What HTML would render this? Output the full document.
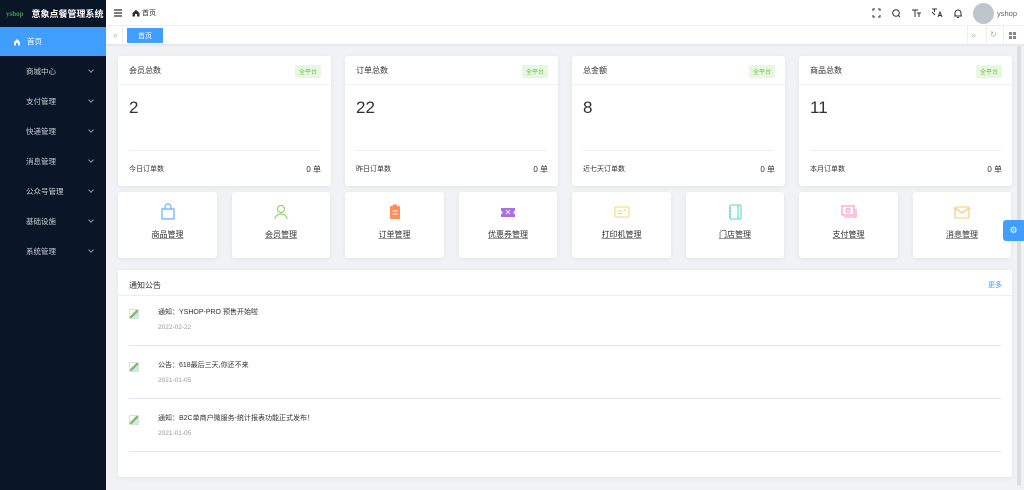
<!DOCTYPE html><html><head><meta charset="utf-8"><style>
*{margin:0;padding:0;box-sizing:border-box}
body{width:1024px;height:490px;overflow:hidden;font-family:"Liberation Sans","Noto Sans CJK SC",sans-serif;background:#f0f2f5;position:relative;font-size:8px;color:#303133}
.side{position:absolute;left:0;top:0;width:106px;height:490px;background:#0a1628}
.logo{height:27px;display:flex;align-items:center;padding-left:6px;color:#fff;font-weight:bold;font-size:9px}
.logo i{font-style:normal;color:#3a9a4a;font-size:7px;margin-right:8px;font-family:"Liberation Serif",serif}
.act{height:29px;background:#409eff;color:#fff;display:flex;align-items:center;padding-left:13px;font-size:7.5px}
.mi{height:30px;color:#c8ccd3;display:flex;align-items:center;padding-left:26px;font-size:7.5px;position:relative}
.mi:after{content:"";position:absolute;right:13px;top:12px;width:3px;height:3px;border-right:1px solid #8a93a0;border-bottom:1px solid #8a93a0;transform:rotate(45deg)}
.hdr{position:absolute;left:106px;top:0;right:0;height:26px;background:#fff;border-bottom:1px solid #eee}
.tags{position:absolute;left:106px;top:26px;right:0;height:19px;background:#fff;border-bottom:1px solid #e4e7ed;box-shadow:0 1px 2px rgba(0,0,0,.05)}
.tag{position:absolute;left:21px;top:2px;width:36px;height:15px;background:#409eff;color:#fff;font-size:7px;display:flex;align-items:center;justify-content:center}
.card{position:absolute;background:#fff;border-radius:3px;box-shadow:0 1px 4px rgba(0,0,0,.06)}
.st .h{height:29px;border-bottom:1px solid #eef0f3;display:flex;align-items:center;justify-content:space-between;padding:0 10px 0 11px;font-size:8px;color:#303133}
.st .b{position:absolute;right:10px;top:9px;background:#e7f7e1;color:#67c23a;font-size:6px;padding:2px 4px;border-radius:2px}
.st .n{position:absolute;left:11px;top:42px;font-size:17px;color:#303133}
.st .l{position:absolute;left:11px;right:11px;top:94px;border-top:1px solid #eceef2}
.st .f{position:absolute;left:11px;right:10px;top:108px;display:flex;justify-content:space-between;font-size:7px;color:#303133}
.st .f b{font-weight:normal;font-size:8px}
.q{text-align:center}
.q svg{position:absolute;left:50%;top:11px;margin-left:-9px}
.q span{position:absolute;left:0;right:0;top:37px;font-size:8px;color:#303133;text-decoration:underline;text-decoration-color:#999}
.nt{left:118px;top:270px;width:894px;height:207px}
.nt .h{height:26px;border-bottom:1px solid #eceef2;padding:10px 0 0 11px;font-size:8px;display:flex;justify-content:space-between;padding-right:10px}
.nt .h a{color:#409eff;font-size:7px}
.it{position:absolute;left:11px;right:11px;height:52px;border-bottom:1px solid #e4e7ed}
.it .t{position:absolute;left:29px;top:13px;font-size:7px;color:#303133}
.it .d{position:absolute;left:29px;top:30px;font-size:6.5px;color:#999}
.it .im{position:absolute;left:0;top:15px;width:10px;height:10px;border:1px solid #ddd;border-radius:1px;background:linear-gradient(135deg,#fff 40%,#7bbf6a 40%,#7bbf6a 60%,#cfe6f5 60%)}
</style></head><body>
<div class="side">
<div class="logo"><i>yshop</i>意象点餐管理系统</div>
<div class="act"><svg width="8" height="8" viewBox="0 0 8 8" style="margin-right:6px"><path d="M1 4L4 1l3 3v3.5H5V5H3v2.5H1z" fill="#fff"/></svg>首页</div>
<div class="mi">商城中心</div><div class="mi">支付管理</div><div class="mi">快递管理</div><div class="mi">消息管理</div><div class="mi">公众号管理</div><div class="mi">基础设施</div><div class="mi">系统管理</div>
</div>
<div class="hdr">
<svg style="position:absolute;left:8px;top:9px" width="8" height="8" viewBox="0 0 8 8"><path d="M0 1h8M0 4h8M0 7h8" stroke="#303133" stroke-width="1.3"/></svg>
<svg style="position:absolute;left:26px;top:9px" width="8" height="8" viewBox="0 0 8 8"><path d="M0.5 4L4 0.8 7.5 4v3.5H5V5H3v2.5H0.5z" fill="#303133"/></svg>
<span style="position:absolute;left:36px;top:8px;font-size:7px;color:#303133">首页</span>
<svg style="position:absolute;left:766px;top:8px" width="110" height="10" viewBox="0 0 110 10" fill="none" stroke="#303133" stroke-width="1">
<path d="M1 3V1h2M6 1h2v2M8 7v2H6M3 9H1V7"/><circle cx="24" cy="5" r="3.3"/><path d="M26.5 7.5l1.5 1.5"/>
<path d="M40 2h6M43 2v7M45 5h4M47 5v4"/><path d="M60 1h5M62.5 1v3M60 4l3 3M66 9l2-5 2 5M67 7.5h2"/>
<path d="M83 8V5a3 3 0 016 0v3h1H82M85 9.5h2"/></svg>
<div style="position:absolute;left:867px;top:3px;width:21px;height:21px;border-radius:50%;background:#c0c4cc"></div>
<span style="position:absolute;left:891px;top:9px;font-size:7.5px;color:#606266">yshop</span>
</div>
<div class="tags">
<span style="position:absolute;left:7px;top:4px;color:#bbb;font-size:9px">«</span>
<div style="position:absolute;left:16px;top:0;width:1px;height:19px;background:#eee"></div>
<div class="tag">首页</div>
<div style="position:absolute;left:861px;top:0;width:1px;height:19px;background:#eee"></div>
<span style="position:absolute;left:865px;top:4px;color:#bbb;font-size:9px">»</span>
<div style="position:absolute;left:880px;top:0;width:1px;height:19px;background:#eee"></div>
<span style="position:absolute;left:884px;top:4px;color:#aaa;font-size:8px">↻</span>
<div style="position:absolute;left:897px;top:0;width:1px;height:19px;background:#eee"></div>
<svg style="position:absolute;left:903px;top:6px" width="7" height="7"><rect x="0" y="0" width="3" height="3" fill="#888"/><rect x="4" y="0" width="3" height="3" fill="#888"/><rect x="0" y="4" width="3" height="3" fill="#888"/><rect x="4" y="4" width="3" height="3" fill="#888"/></svg>
</div>
<div style="position:absolute;left:1017px;top:46px;width:4px;height:440px;background:#ddd;border-radius:2px"></div>

<div class="card st" style="left:118px;top:56px;width:213px;height:130px"><div class="h">会员总数</div><span class="b">全平台</span><div class="n">2</div><div class="l"></div><div class="f"><span>今日订单数</span><b>0 单</b></div></div>
<div class="card st" style="left:345px;top:56px;width:213px;height:130px"><div class="h">订单总数</div><span class="b">全平台</span><div class="n">22</div><div class="l"></div><div class="f"><span>昨日订单数</span><b>0 单</b></div></div>
<div class="card st" style="left:572px;top:56px;width:213px;height:130px"><div class="h">总金额</div><span class="b">全平台</span><div class="n">8</div><div class="l"></div><div class="f"><span>近七天订单数</span><b>0 单</b></div></div>
<div class="card st" style="left:799px;top:56px;width:213px;height:130px"><div class="h">商品总数</div><span class="b">全平台</span><div class="n">11</div><div class="l"></div><div class="f"><span>本月订单数</span><b>0 单</b></div></div>

<div class="card q" style="left:118px;top:192px;width:99px;height:66px"><svg width="18" height="18" viewBox="0 0 18 18" fill="none" stroke="#5cb3ff" stroke-width="1.2"><path d="M3 6h12v10H3zM6 6V4a3 3 0 016 0v2"/></svg><span>商品管理</span></div>
<div class="card q" style="left:232px;top:192px;width:98px;height:66px"><svg width="18" height="18" viewBox="0 0 18 18" fill="none" stroke="#95d475" stroke-width="1.2"><circle cx="9" cy="6" r="3.5"/><path d="M3 16a6 5 0 0112 0"/></svg><span>会员管理</span></div>
<div class="card q" style="left:345px;top:192px;width:99px;height:66px"><svg width="18" height="18" viewBox="0 0 18 18"><rect x="4" y="3" width="10" height="13" rx="1" fill="#ff8c5a"/><rect x="7" y="1.5" width="4" height="3" fill="#ff8c5a"/><path d="M6.5 8h5M6.5 11h5" stroke="#fff" stroke-width="1"/></svg><span>订单管理</span></div>
<div class="card q" style="left:459px;top:192px;width:98px;height:66px"><svg width="18" height="18" viewBox="0 0 18 18"><path d="M2 5h14v3a1.5 1.5 0 000 3v3H2v-3a1.5 1.5 0 000-3z" fill="#a770e8"/><path d="M7 7l4 4M11 7l-4 4" stroke="#fff" stroke-width=".8"/></svg><span>优惠券管理</span></div>
<div class="card q" style="left:572px;top:192px;width:99px;height:66px"><svg width="18" height="18" viewBox="0 0 18 18" fill="none" stroke="#ffd66b" stroke-width="1.1"><rect x="2" y="4" width="14" height="10" rx="1"/><path d="M5 8h4M5 10.5h4M12 6v2M11 7h2"/></svg><span>打印机管理</span></div>
<div class="card q" style="left:686px;top:192px;width:98px;height:66px"><svg width="18" height="18" viewBox="0 0 18 18" fill="none" stroke="#5fd6c8" stroke-width="1.1"><rect x="4" y="2" width="11" height="14" rx="1"/><path d="M12 2v14M3 5h2M3 8h2M3 11h2M3 14h2"/></svg><span>门店管理</span></div>
<div class="card q" style="left:799px;top:192px;width:99px;height:66px"><svg width="18" height="18" viewBox="0 0 18 18" fill="none" stroke="#ff8fc8" stroke-width="1.1"><rect x="2" y="3" width="12" height="9"/><path d="M4 14h12V6"/><circle cx="8" cy="7.5" r="2"/></svg><span>支付管理</span></div>
<div class="card q" style="left:913px;top:192px;width:98px;height:66px"><svg width="18" height="18" viewBox="0 0 18 18" fill="none" stroke="#ffc46b" stroke-width="1.1"><rect x="2" y="4" width="14" height="11" rx="1"/><path d="M2 5l7 5 7-5"/></svg><span>消息管理</span></div>
<div style="position:absolute;left:1003px;top:220px;width:21px;height:21px;background:#409eff;border-radius:3px 0 0 3px;color:#fff;font-size:9px;display:flex;align-items:center;justify-content:center">⚙</div>

<div class="card nt"><div class="h"><span>通知公告</span><a>更多</a></div>
<div class="it" style="top:24px"><div class="im"></div><div class="t">通知：YSHOP-PRO 预售开始啦</div><div class="d">2022-02-22</div></div>
<div class="it" style="top:77px"><div class="im"></div><div class="t">公告：618最后三天,你还不来</div><div class="d">2021-01-05</div></div>
<div class="it" style="top:130px"><div class="im"></div><div class="t">通知：B2C单商户微服务-统计报表功能正式发布！</div><div class="d">2021-01-05</div></div>
</div>
</body></html>
